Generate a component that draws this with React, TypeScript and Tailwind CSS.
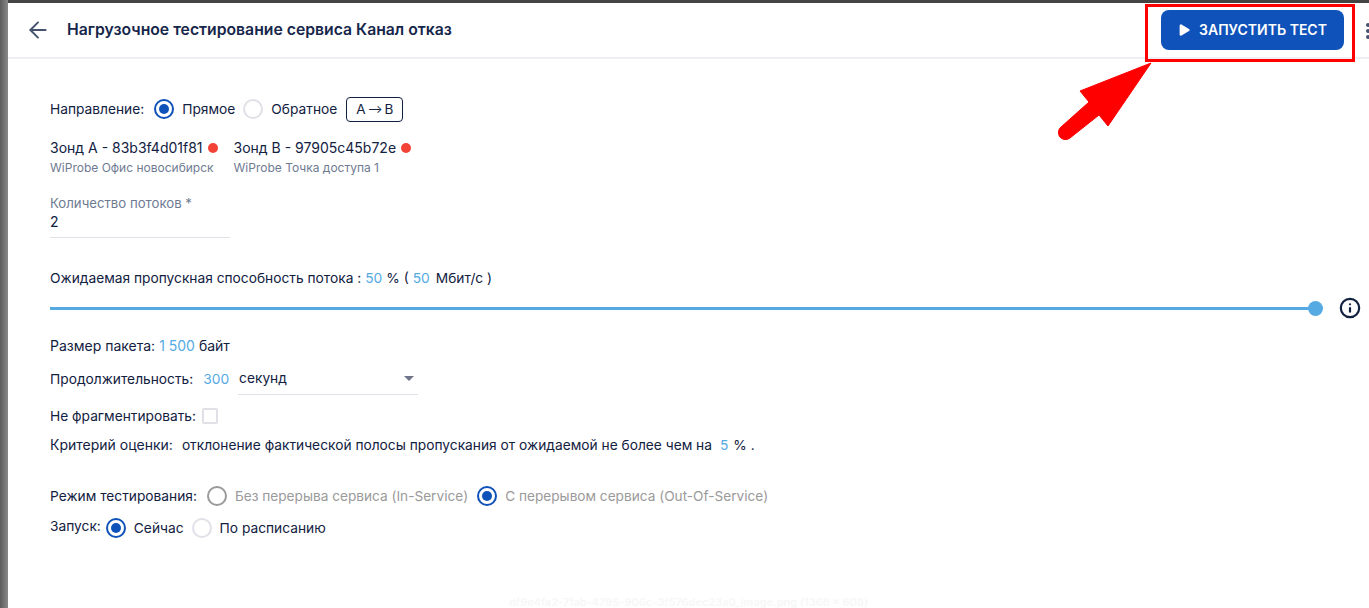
import React from 'react';
import { ArrowLeft, Info, Play } from 'lucide-react';

const Radio = ({ checked, muted }: { checked?: boolean; muted?: boolean }) => (
  <span
    className={`flex h-5 w-5 shrink-0 items-center justify-center rounded-full border-2 ${
      checked ? 'border-[#0f52b9]' : muted ? 'border-[#9a9a9a]' : 'border-[#e0e0e8]'
    }`}
  >
    {checked && <span className="h-2.5 w-2.5 rounded-full bg-[#0f52b9]" />}
  </span>
);

const Num = ({ children }: { children: React.ReactNode }) => (
  <span className="text-[#55aae4]">{children}</span>
);

const Probe = ({ name, sub }: { name: string; sub: string }) => (
  <div>
    <div className="flex h-[20px] items-center text-sm">
      <span>{name}</span>
      <span className="ml-[5px] h-[10px] w-[10px] rounded-full bg-[#f44336]" />
    </div>
    <div className="mt-[2px] text-xs leading-4 text-[#6f7b92]">{sub}</div>
  </div>
);

export default function App() {
  return (
    <div className="relative flex h-[608px] w-[1369px] overflow-hidden bg-white font-['Inter',sans-serif] text-[13.75px] text-[#12213f]">
      <div className="w-[8px] shrink-0 bg-gradient-to-r from-[#5c5c5c] to-[#8a8a8a]" />
      <div className="flex min-w-0 flex-1 flex-col">
        <div className="h-[3px] shrink-0 bg-[#444444]" />

        <header className="flex h-[56px] shrink-0 items-center border-b-2 border-[#eeeef4] pl-[17px] pr-[25px]">
          <ArrowLeft size={26} strokeWidth={1.8} className="text-[#45536e]" />
          <h1 className="ml-[16px] text-[15.75px] font-semibold text-[#16264a]">
            Нагрузочное тестирование сервиса Канал отказ
          </h1>
          <button className="ml-auto flex h-10 w-[183px] items-center justify-center gap-[9px] rounded-lg bg-[#0f52b9] text-sm font-semibold text-white">
            <Play size={12} fill="currentColor" strokeWidth={0} className="scale-125" />
            ЗАПУСТИТЬ ТЕСТ
          </button>
        </header>

        <main className="flex flex-col pl-[42px] pr-[8px]">
          <div className="mt-[38px] flex h-[24px] items-center">
            <span>Направление:</span>
            <span className="ml-[10px]"><Radio checked /></span>
            <span className="ml-[8px]">Прямое</span>
            <span className="ml-[8px]"><Radio /></span>
            <span className="ml-[8px]">Обратное</span>
            <span className="ml-[9px] flex h-[25px] w-[57px] items-center justify-center gap-[2px] rounded border border-[#12213f] text-[13.5px]">
              A <span className="text-[11px]">⟶</span> B
            </span>
          </div>

          <div className="mt-[17px] flex gap-[16px]">
            <Probe name="Зонд А - 83b3f4d01f81" sub="WiProbe Офис новосибирск" />
            <Probe name="Зонд В - 97905c45b72e" sub="WiProbe Точка доступа 1" />
          </div>

          <div className="mt-[19px] w-[180px] border-b border-[#e0e0e6] pb-[5px]">
            <div className="text-[13.2px] leading-4 text-[#6f7b92]">Количество потоков *</div>
            <div className="mt-px h-[20px] text-sm leading-5">2</div>
          </div>

          <div className="mt-[30px] flex h-[20px] items-center gap-[4px]">
            <span>Ожидаемая пропускная способность потока :</span>
            <Num>50</Num>
            <span>% (</span>
            <Num>50</Num>
            <span className="ml-[2px]">Мбит/с )</span>
          </div>

          <div className="mt-[10px] flex h-[20px] items-center">
            <div className="flex flex-1 items-center">
              <div className="h-[3px] flex-1 bg-[#55aae4]" />
              <div className="-ml-px h-[15px] w-[15px] rounded-full bg-[#55aae4]" />
            </div>
            <Info size={22} strokeWidth={2.4} className="ml-[16px] text-[#12213f]" />
          </div>

          <div className="mt-[18px] flex h-[20px] items-center gap-[4px] text-sm">
            <span>Размер пакета:</span>
            <Num>1 500</Num>
            <span>байт</span>
          </div>

          <div className="mt-[11px] flex h-[24px] items-center">
            <span>Продолжительность:</span>
            <span className="ml-[10px]"><Num>300</Num></span>
            <div className="ml-[9px] flex h-[32px] w-[180px] items-center justify-between border-b border-[#e0e0e6] pr-[4px] pl-px">
              <span>секунд</span>
              <span className="h-0 w-0 border-x-[5px] border-t-[5px] border-x-transparent border-t-[#6f7488]" />
            </div>
          </div>

          <div className="mt-[15px] flex h-[20px] items-center">
            <span>Не фрагментировать:</span>
            <span className="ml-[6px] h-[16px] w-[16px] rounded-[2px] border-2 border-[#e0e0e6]" />
          </div>

          <div className="mt-[9px] flex h-[20px] items-center">
            <span className="text-sm">Критерий оценки:</span>
            <span className="ml-[9px]">отклонение фактической полосы пропускания от ожидаемой не более чем на</span>
            <span className="ml-[8px]"><Num>5</Num></span>
            <span className="ml-[5px]">% .</span>
          </div>

          <div className="mt-[31px] flex h-[20px] items-center">
            <span>Режим тестирования:</span>
            <span className="ml-[10px]"><Radio muted /></span>
            <span className="ml-[8px] text-[13.65px] text-[#9a9a9a]">Без перерыва сервиса (In-Service)</span>
            <span className="ml-[9px]"><Radio checked /></span>
            <span className="ml-[8px] text-[13.65px] text-[#9a9a9a]">С перерывом сервиса (Out-Of-Service)</span>
          </div>

          <div className="mt-[12px] flex h-[20px] items-center">
            <span className="-mt-[3px]">Запуск:</span>
            <span className="ml-[5px]"><Radio checked /></span>
            <span className="ml-[8px]">Сейчас</span>
            <span className="ml-[8px]"><Radio /></span>
            <span className="ml-[8px]">По расписанию</span>
          </div>
        </main>
      </div>

      {/* dots menu cut off by the window edge */}
      <div className="absolute left-[1366px] top-[23px] flex flex-col gap-[2px]">
        <span className="h-[4px] w-[4px] rounded-full bg-[#45536e]" />
        <span className="h-[4px] w-[4px] rounded-full bg-[#45536e]" />
        <span className="h-[4px] w-[4px] rounded-full bg-[#45536e]" />
      </div>

      {/* annotation drawn over the screenshot */}
      <div className="absolute left-[1145px] top-[4px] h-[58px] w-[210px] border-[3px] border-[#ff0000]" />
      <svg className="absolute left-[1050px] top-[55px]" width="110" height="90" viewBox="0 0 110 90">
        <path d="M101 8 L30 36 L39 47 L11 72 A7 7 0 0 0 20 83 L49 60 L58 71 Z" fill="#ff0000" stroke="#ff0000" strokeWidth="1" />
      </svg>

      <div className="absolute left-[509px] top-[597px] text-[11px] leading-[11px] font-semibold whitespace-nowrap text-[#f7f7f7]">
        df9e4fa2-7fab-4795-906c-3f576dec23a0_image.png (1368 x 608)
      </div>
    </div>
  );
}
